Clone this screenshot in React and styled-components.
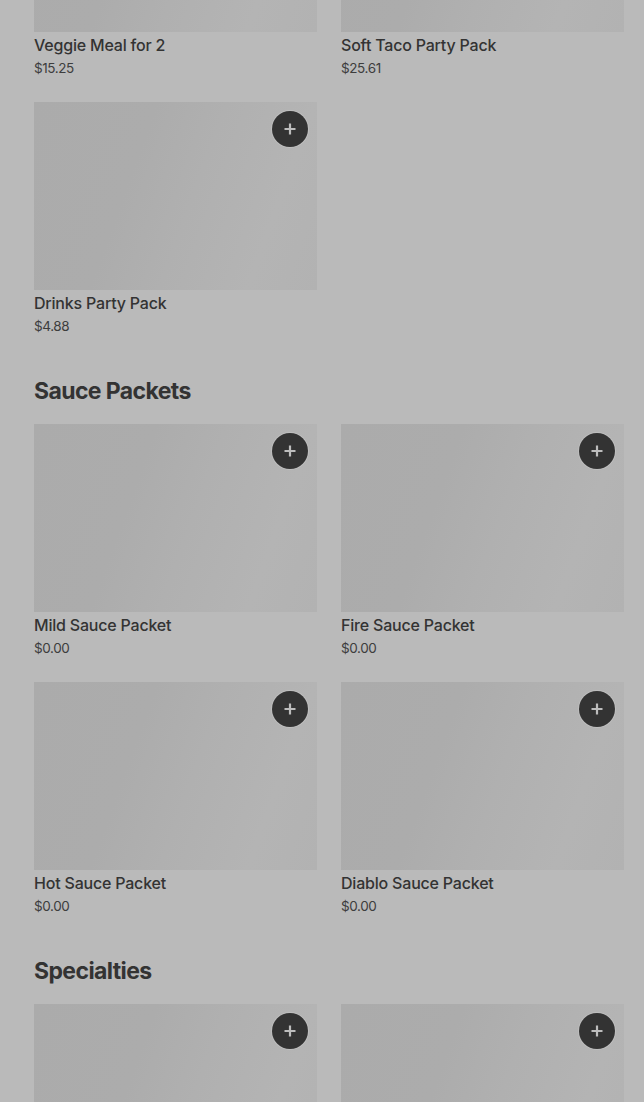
import React from "react";
import styled, { createGlobalStyle } from "styled-components";

const GlobalStyle = createGlobalStyle`
  html, body {
    margin: 0;
    padding: 0;
    background: #bababa;
    overflow: hidden;
  }
  * { box-sizing: border-box; }
`;

const Page = styled.div`
  width: 644px;
  height: 1102px;
  overflow: hidden;
  background: #bababa;
  font-family: Inter, "Open Sans", "Liberation Sans", sans-serif;
  color: #333333;
`;

const Content = styled.div`
  margin-top: -156px;
  padding: 0 20px 0 34px;
`;

const Section = styled.section``;

const SectionTitle = styled.h2`
  margin: 39px 0 17px 0;
  font-size: 23px;
  line-height: 32px;
  font-weight: 700;
  letter-spacing: -0.6px;
  color: #333333;
`;

const Grid = styled.div`
  display: grid;
  grid-template-columns: 283px 283px;
  column-gap: 24px;
  row-gap: 24px;
`;

const Card = styled.div`
  display: flex;
  flex-direction: column;
`;

const Thumb = styled.div`
  position: relative;
  height: 188px;
  background: linear-gradient(
    110deg,
    #ababab 0%,
    #acacac 35%,
    #b0b0b0 55%,
    #b4b4b4 80%,
    #b2b2b2 100%
  );
`;

const AddButton = styled.button`
  position: absolute;
  top: 9px;
  right: 9px;
  width: 36px;
  height: 36px;
  border-radius: 50%;
  border: none;
  padding: 0;
  background: #333333;
  box-shadow: 0 0 0 1px rgba(255, 255, 255, 0.15);
  display: flex;
  align-items: center;
  justify-content: center;
`;

const Name = styled.div`
  margin-top: 3px;
  font-size: 16px;
  line-height: 20px;
  font-weight: 500;
  letter-spacing: -0.2px;
  color: #333333;
`;

const Price = styled.div`
  margin-top: 3px;
  font-size: 13.5px;
  line-height: 20px;
  font-weight: 400;
  color: #3d3d3d;
  letter-spacing: -0.4px;
`;

function Plus() {
  return (
    <svg width="14" height="14" viewBox="0 0 14 14">
      <path d="M7 1.5v11M1.5 7h11" stroke="#bdbdbd" strokeWidth="2.2" />
    </svg>
  );
}

function Item({ name, price, showName = true }) {
  return (
    <Card>
      <Thumb>
        <AddButton aria-label="Add">
          <Plus />
        </AddButton>
      </Thumb>
      {showName && <Name>{name}</Name>}
      {showName && <Price>{price}</Price>}
    </Card>
  );
}

const sections = [
  {
    title: null,
    items: [
      { name: "Veggie Meal for 2", price: "$15.25" },
      { name: "Soft Taco Party Pack", price: "$25.61" },
      { name: "Drinks Party Pack", price: "$4.88" },
    ],
  },
  {
    title: "Sauce Packets",
    items: [
      { name: "Mild Sauce Packet", price: "$0.00" },
      { name: "Fire Sauce Packet", price: "$0.00" },
      { name: "Hot Sauce Packet", price: "$0.00" },
      { name: "Diablo Sauce Packet", price: "$0.00" },
    ],
  },
  {
    title: "Specialties",
    items: [
      { name: "Specialty 1", price: "" },
      { name: "Specialty 2", price: "" },
    ],
  },
];

export default function App() {
  return (
    <Page>
      <GlobalStyle />
      <Content>
        {sections.map((s, i) => (
          <Section key={i}>
            {s.title && <SectionTitle>{s.title}</SectionTitle>}
            <Grid>
              {s.items.map((it) => (
                <Item
                  key={it.name}
                  name={it.name}
                  price={it.price}
                  showName={s.title !== "Specialties"}
                />
              ))}
            </Grid>
          </Section>
        ))}
      </Content>
    </Page>
  );
}
